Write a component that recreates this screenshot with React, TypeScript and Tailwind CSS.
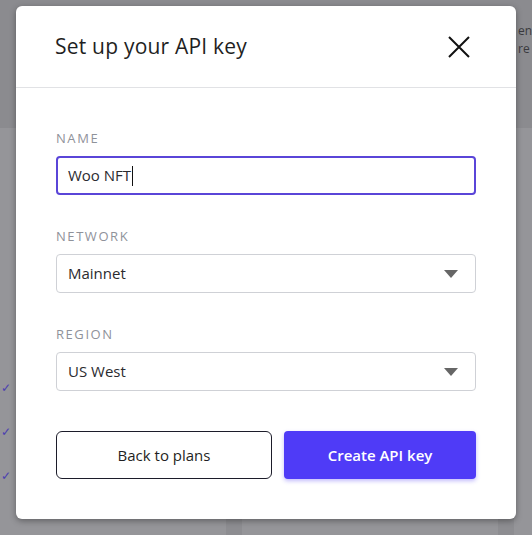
import React from 'react';

const labelCls = 'text-[13px] tracking-[0.12em] text-[#8f929a] uppercase leading-none';

const SelectBox = ({ value }: { value: string }) => (
  <div className="flex items-center justify-between h-[39px] mt-[11px] pl-[11px] pr-[17px] border border-[#cfd1d6] rounded-[4px] bg-white">
    <span className="text-[15px] text-[#2b2b2f]">{value}</span>
    <svg width="14" height="8" viewBox="0 0 14 8">
      <path d="M0 0 H14 L7 8 Z" fill="#666" />
    </svg>
  </div>
);

export default function App() {
  return (
    <div
      className="relative w-[532px] h-[535px] overflow-hidden bg-[#8d8d91]"
      style={{ fontFamily: '"Open Sans", "Liberation Sans", sans-serif' }}
    >
      {/* dimmed page behind */}
      <div className="flex flex-col h-full">
        <div className="h-[128px] bg-[#8b8b8f] flex justify-end pt-[22px]">
          <div className="text-[12px] leading-[18px] text-[#3a3a3e] w-[14px] overflow-hidden whitespace-nowrap">
            <div>en</div>
            <div>re</div>
          </div>
        </div>
        <div className="flex-1 flex gap-[16px]">
          <div className="w-[226px] bg-[#959599] flex flex-col gap-[32px] pt-[254px] pl-[1px]">
            <span className="text-[#4b3fb0] text-[12px] leading-none">✓</span>
            <span className="text-[#4b3fb0] text-[12px] leading-none">✓</span>
            <span className="text-[#4b3fb0] text-[12px] leading-none">✓</span>
          </div>
          <div className="w-[256px] bg-[#959599]" />
          <div className="flex-1 bg-[#959599]" />
        </div>
      </div>

      {/* modal */}
      <div className="absolute left-[16px] top-[6px] w-[500px] h-[513px] bg-white rounded-[6px] shadow-[0_2px_6px_rgba(0,0,0,0.35)]">
        <div className="flex items-center justify-between h-[82px] pl-[39px] pr-[46px] border-b border-[#e1e2e5]">
          <h2 className="text-[21px] text-[#1f1f23] tracking-[0.01em]">Set up your API key</h2>
          <svg width="22" height="22" viewBox="0 0 22 22">
            <path d="M1 1 L21 21 M21 1 L1 21" stroke="#111" strokeWidth="2" />
          </svg>
        </div>

        <div className="px-[40px] pt-[44px]">
          <div className={labelCls}>Name</div>
          <div className="flex items-center h-[39px] mt-[11px] pl-[10px] border-2 border-[#5a45d8] rounded-[4px]">
            <span className="text-[15px] text-[#2b2b2f]">Woo NFT</span>
            <span className="w-px h-[20px] bg-[#111] ml-[1px]" />
          </div>

          <div className={`${labelCls} mt-[35px]`}>Network</div>
          <SelectBox value="Mainnet" />

          <div className={`${labelCls} mt-[35px]`}>Region</div>
          <SelectBox value="US West" />

          <div className="flex gap-[12px] mt-[40px]">
            <button className="w-[216px] h-[48px] border border-[#1c1c2a] rounded-[6px] text-[15px] text-[#1f1f23] bg-white">
              Back to plans
            </button>
            <button className="flex-1 h-[48px] rounded-[4px] bg-[#4f3bf7] text-white text-[15px] font-semibold shadow-[0_2px_4px_rgba(79,59,247,0.35)]">
              Create API key
            </button>
          </div>
        </div>
      </div>
    </div>
  );
}
